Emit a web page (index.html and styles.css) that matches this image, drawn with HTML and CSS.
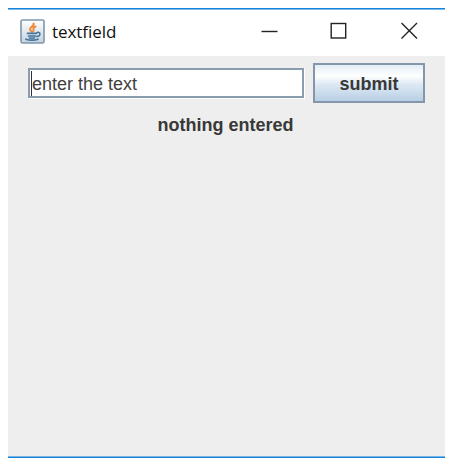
FILE: index.html
```
<!DOCTYPE html>
<html lang="en">
<head>
<meta charset="utf-8">
<title>textfield</title>
<link rel="stylesheet" href="styles.css">
</head>
<body>
<main class="window">
  <header class="titlebar">
    <svg class="app-icon" width="25" height="25" viewBox="0 0 25 25">
      <defs><linearGradient id="tile" x1="0" y1="0" x2="0" y2="1"><stop offset="0" stop-color="#fff"/><stop offset="1" stop-color="#c3d2df"/></linearGradient></defs>
      <rect x="1" y="1" width="23" height="23" rx="1.5" fill="url(#tile)" stroke="#8097ab" stroke-width="1.6"/>
      <g fill="none" stroke-linecap="round">
        <path d="M13.500 4.500C15 7 9.500 8 10 10.500C10.300 12 12 12 12 13M15.500 7.500C12 9 14 10.500 13.500 12" stroke="#ee8b3b" stroke-width="2"/>
        <path d="M7.500 14.300H16.500M8.500 17H15.500M6 20.200C9 21.500 15 21.500 18 20.200M9.500 19H14.500" stroke="#44749a" stroke-width="1.7"/>
        <path d="M17 13.500C21 12.500 21 17 16.800 17.500" stroke="#44749a" stroke-width="1.5"/>
      </g>
    </svg>
    <h1 class="title">textfield</h1>
    <svg class="controls" width="158" height="18" viewBox="0 0 158 18">
      <g fill="none" stroke="#222" stroke-width="1.4">
        <path d="M1.500 9.500H17.500"/>
        <rect x="71.200" y="1.500" width="14.500" height="14.500"/>
        <path d="M141.500 1L157 16.500M157 1L141.500 16.500"/>
      </g>
    </svg>
  </header>
  <section class="content">
    <div class="row">
      <div class="field"><span class="caret"></span><span>enter the text</span></div>
      <button class="submit">submit</button>
    </div>
    <p class="status">nothing entered</p>
  </section>
</main>
</body>
</html>
```
FILE: styles.css
```
* { box-sizing: border-box; }
body { margin: 0; background: #fff; font-family: "Liberation Sans", sans-serif; }
.window {
  width: 437px;
  height: 450px;
  margin: 8px;
  display: flex;
  flex-direction: column;
  border-top: 1px solid #1883d7;
  border-bottom: 1px solid #1883d7;
}
.titlebar {
  height: 47px;
  flex: none;
  display: flex;
  align-items: center;
  padding: 0 27px 0 12px;
  border-top: 1px solid #7dbbea;
  background: #fff;
}
.app-icon { margin-top: -4px; }
.title {
  margin: -3px auto 0 7px;
  font: 400 17px/24px "Open Sans", sans-serif;
  letter-spacing: -0.05px;
  color: #111;
}
.controls { margin-top: -4px; }
.content {
  flex: 1;
  padding: 7px 20px 0;
  background: #eee;
  border-bottom: 1px solid #78b5e5;
}
.row { display: flex; align-items: center; justify-content: space-between; }
.field {
  width: 276px;
  height: 30px;
  display: flex;
  align-items: center;
  padding: 3px 0 0 1px;
  background: #fff;
  border: 2px solid #8b9caf;
  box-shadow: 1px 1px 0 #fff;
  color: #404040;
  font-size: 18px;
}
.caret { width: 1px; height: 25px; margin-top: -2px; background: #333; }
.submit {
  width: 112px;
  height: 40px;
  padding: 2px 0 0;
  border: 2px solid #8496a8;
  background: linear-gradient(#e3edf5, #fff 30%, #dce8f3 55%, #b8cfe5);
  font: bold 18px "Liberation Sans", sans-serif;
  color: #383838;
}
.status {
  margin: 11px 2px 0 0;
  font-size: 18px;
  line-height: 22px;
  font-weight: bold;
  text-align: center;
  color: #383838;
}
```
